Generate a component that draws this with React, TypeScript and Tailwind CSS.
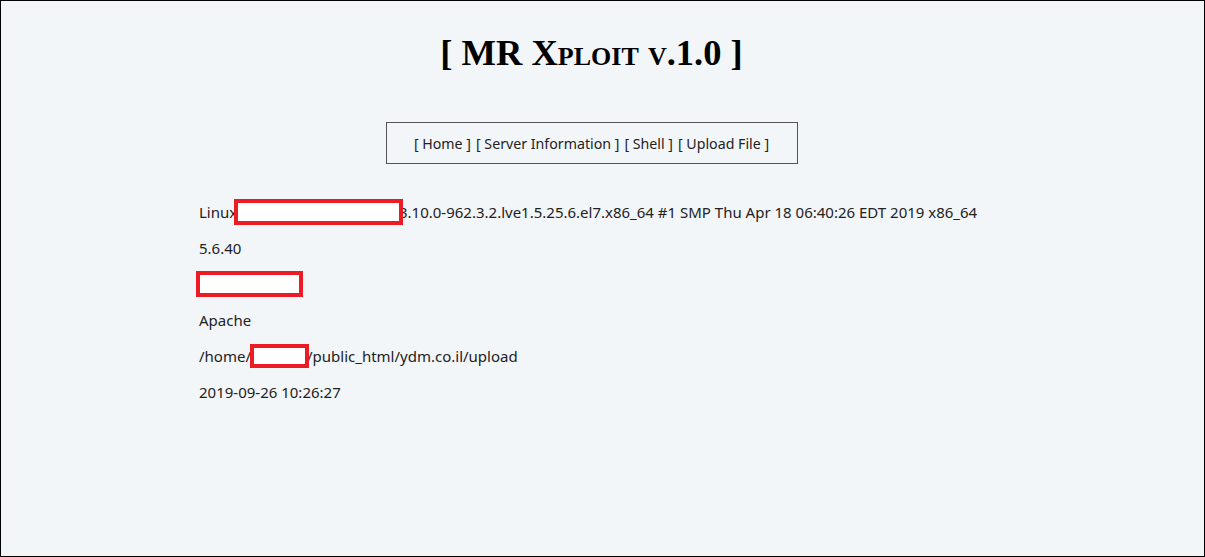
export default function App() {
  const rows = [
    { key: 'uname' },
    { key: 'php' },
    { key: 'ip' },
    { key: 'server' },
    { key: 'path' },
    { key: 'date' },
  ]

  const redBox = 'inline-block align-middle border-4 border-[#ec1c24] bg-white'

  return (
    <div className="w-[1205px] h-[557px] border border-black bg-[#f2f6f9] text-[#222] font-['Noto_Sans',sans-serif] overflow-hidden">
      {/* content is centred as if a scrollbar sat on the right */}
      <div className="w-[1181px]">
        <h1 className="mt-[32px] text-center text-[36.5px] leading-[40px] font-bold [font-variant:small-caps] font-['Liberation_Serif',serif] text-black">
          [ MR Xploit v.1.0 ]
        </h1>

        <div className="mt-[49px] flex justify-center">
          <div className="w-[412px] h-[42px] border border-[#555] flex items-center justify-center pt-[1px] text-[14.2px] text-[#222]">
            <span>[ <a className="text-[#222]">Home</a> ]</span>
            <span className="ml-[5px]">[ <a className="text-[#222]">Server Information</a> ]</span>
            <span className="ml-[5px]">[ <a className="text-[#222]">Shell</a> ]</span>
            <span className="ml-[5px]">[ <a className="text-[#222]">Upload File</a> ]</span>
          </div>
        </div>

        <div className="ml-[198px] mt-[30px] text-[15px]">
          {rows.map((r) => (
            <div key={r.key} className="h-[36px] flex items-center whitespace-nowrap">
              {r.key === 'uname' && (
                <>
                  <span className="w-[35px]">Linux</span>
                  <span className={`${redBox} w-[169px] h-[26px] -mr-[4px] relative z-10`} />
                  <span>3.10.0-962.3.2.lve1.5.25.6.el7.x86_64 #1 SMP Thu Apr 18 06:40:26 EDT 2019 x86_64</span>
                </>
              )}
              {r.key === 'php' && <span>5.6.40</span>}
              {r.key === 'ip' && <span className={`${redBox} w-[107px] h-[26px] -ml-[3px]`} />}
              {r.key === 'server' && <span>Apache</span>}
              {r.key === 'path' && (
                <>
                  <span className="w-[51px]">/home/</span>
                  <span className={`${redBox} w-[59px] h-[24px] -mr-[2px] relative z-10`} />
                  <span>/public_html/ydm.co.il/upload</span>
                </>
              )}
              {r.key === 'date' && <span>2019-09-26 10:26:27</span>}
            </div>
          ))}
        </div>
      </div>
    </div>
  )
}
